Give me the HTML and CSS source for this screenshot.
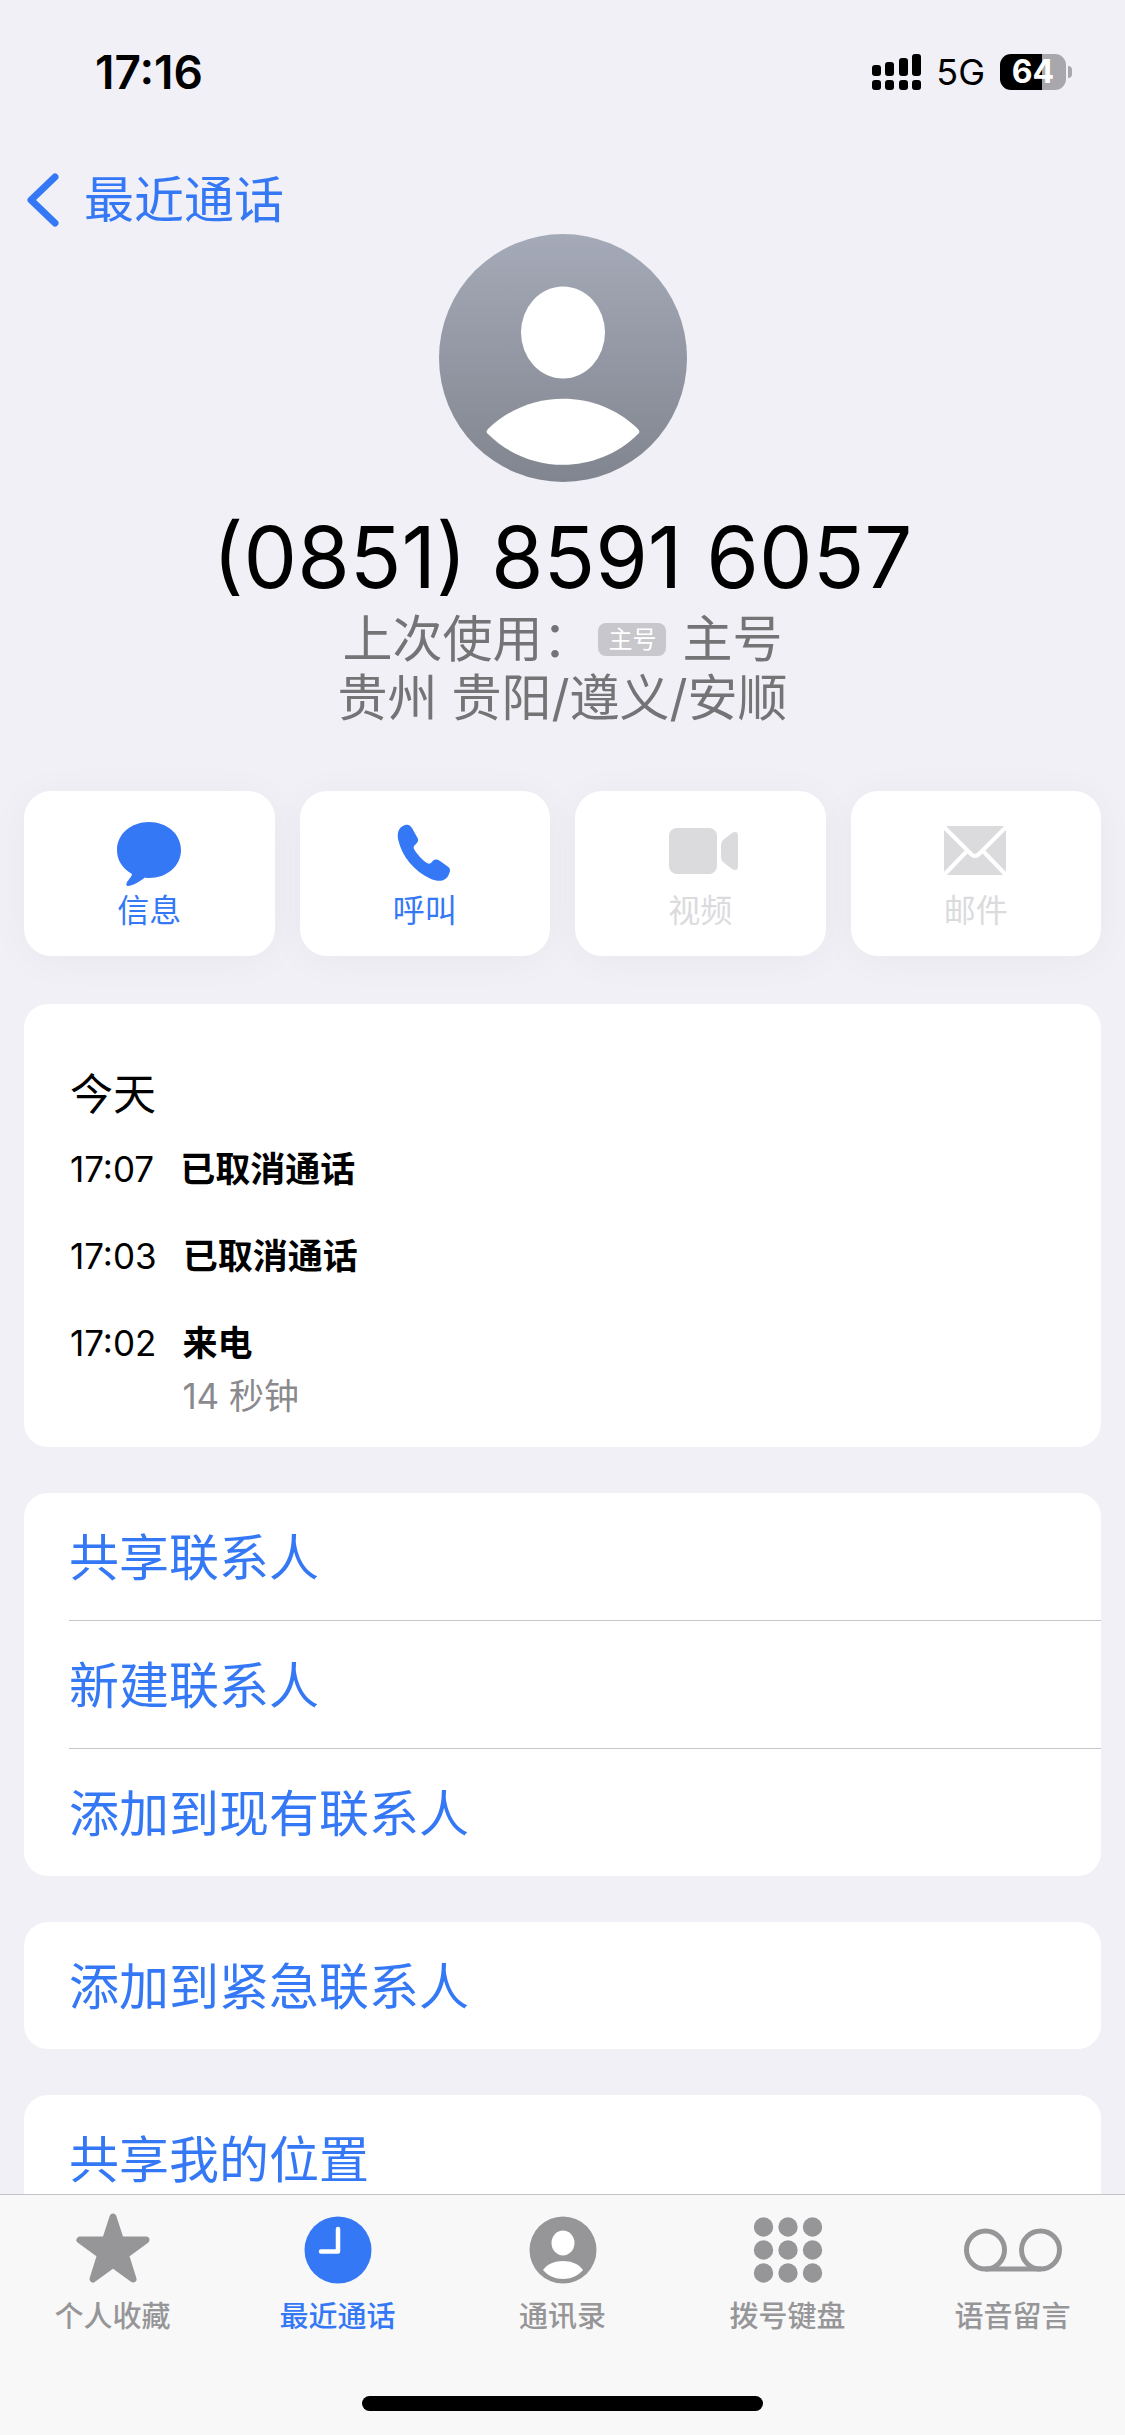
FILE: index.html
```html
<!DOCTYPE html>
<html lang="zh-CN">
<head>
    <meta charset="UTF-8">
    <meta name="viewport" content="width=device-width, initial-scale=1.0">
    <title>最近通话</title>
    <link rel="stylesheet" href="styles.css">
</head>
<body>
    <!-- Status Bar -->
    <div class="status-bar">
        <span class="clock">17:16</span>
        <div class="status-icons">
            <svg class="signal" width="49" height="36" viewBox="0 0 49 36">
                <rect x="0" y="11" width="9" height="11" rx="3"/>
                <rect x="13" y="8" width="9" height="14" rx="3"/>
                <rect x="27" y="4" width="9" height="18" rx="3"/>
                <rect x="40" y="0" width="9" height="22" rx="3"/>
                <rect x="0" y="26" width="9" height="10" rx="3"/>
                <rect x="13" y="26" width="9" height="10" rx="3"/>
                <rect x="27" y="26" width="9" height="10" rx="3"/>
                <rect x="40" y="26" width="9" height="10" rx="3"/>
            </svg>
            <span class="network">5G</span>
            <div class="battery"><span class="battery-level">64</span></div>
        </div>
    </div>

    <!-- Navigation -->
    <nav class="navbar">
        <a href="#" class="back">
            <svg width="36" height="56" viewBox="0 0 36 56" fill="none" stroke="currentColor" stroke-width="7" stroke-linecap="round" stroke-linejoin="round">
                <path d="M31 5L7 28L31 51"/>
            </svg>
            最近通话
        </a>
    </nav>

    <!-- Contact Header -->
    <header class="contact">
        <svg class="avatar" viewBox="0 0 248 248">
            <defs>
                <linearGradient id="avatar-fill" x1="0" y1="0" x2="0" y2="1">
                    <stop offset="0" stop-color="#a5aab8"/>
                    <stop offset="1" stop-color="#81858f"/>
                </linearGradient>
            </defs>
            <circle cx="124" cy="124" r="124" fill="url(#avatar-fill)"/>
            <ellipse cx="124" cy="98.5" rx="42" ry="46" fill="#fff"/>
            <path d="M49 200C47 198 47 197 50 194C91 155 157 155 198 194C201 197 201 198 199 200C158 241 90 241 49 200Z" fill="#fff"/>
        </svg>
        <h1>(0851) 8591 6057</h1>
        <p>上次使用：<span class="badge">主号</span> 主号</p>
        <p>贵州 贵阳/遵义/安顺</p>
    </header>

    <!-- Action Buttons -->
    <div class="actions">
        <button type="button">
            <svg width="70" height="62" viewBox="0 0 70 62" fill="currentColor">
                <path d="M35 2C53 2 67 14 67 30C67 46 53 58 35 58C34 58 32 58 31 57.5C25 62 18 66 14 66C12 66 12 64 13 62C16 58 18 56 18 54C8 48 3 40 3 30C3 14 17 2 35 2Z"/>
            </svg>
            信息
        </button>
        <button type="button">
            <svg width="70" height="62" viewBox="2 0 70 62" fill="currentColor">
                <path d="M17 5C20 4 22 5 24 8L29 17C31 20 30 22 28 24C26 26 25 27 26 29C29 34 34 40 39 43C41 44 42 44 44 42C46 39 49 39 52 41L59 46C62 48 63 50 61 54C58 62 50 62 43 59C26 51 14 37 10 19C9 12 11 7 17 5Z"/>
            </svg>
            呼叫
        </button>
        <button type="button" disabled>
            <svg width="70" height="62" viewBox="-4 0 70 62" fill="currentColor">
                <rect x="0" y="8" width="48" height="46" rx="8"/>
                <path d="M52 25Q52 22 54 20L63 13Q69 10 69 16V46Q69 52 63 49L54 42Q52 40 52 37Z"/>
            </svg>
            视频
        </button>
        <button type="button" disabled>
            <svg width="70" height="62" viewBox="1 0 70 62">
                <rect x="4" y="6" width="62" height="49" rx="3" fill="currentColor"/>
                <path d="M3 6L31 34Q35 38 39 34L67 6M3 56L27 31M67 56L43 31" fill="none" stroke="#fff" stroke-width="4"/>
            </svg>
            邮件
        </button>
    </div>

    <!-- Call History -->
    <section class="card history">
        <h2>今天</h2>
        <ul>
            <li><time>17:07</time><div><b>已取消通话</b></div></li>
            <li><time>17:03</time><div><b>已取消通话</b></div></li>
            <li><time>17:02</time><div><b>来电</b><small>14 秒钟</small></div></li>
        </ul>
    </section>

    <div class="card menu">
        <button type="button">共享联系人</button>
        <button type="button">新建联系人</button>
        <button type="button">添加到现有联系人</button>
    </div>

    <div class="card menu">
        <button type="button">添加到紧急联系人</button>
    </div>

    <div class="card menu">
        <button type="button">共享我的位置</button>
    </div>

    <!-- Tab Bar -->
    <footer class="tab-bar">
        <nav class="tabs">
            <a href="#">
                <svg width="76" height="72" viewBox="0 0 76 72" fill="currentColor" stroke="currentColor" stroke-width="7" stroke-linejoin="round">
                    <path d="M38 5L45.5 28H71L50.5 43L58 67L38 52.5L18 67L25.5 43L5 28H30.5Z"/>
                </svg>
                个人收藏
            </a>
            <a href="#" class="active">
                <svg width="76" height="72" viewBox="0 0 76 72" fill="none">
                    <circle cx="38" cy="38" r="33.5" fill="currentColor"/>
                    <path d="M38 17V39.5H21" stroke="#fff" stroke-width="4.5" stroke-linecap="round" stroke-linejoin="round"/>
                </svg>
                最近通话
            </a>
            <a href="#">
                <svg width="76" height="72" viewBox="0 0 76 72" fill="#fff">
                    <circle cx="38" cy="38" r="33.5" fill="currentColor"/>
                    <ellipse cx="38" cy="31" rx="11.5" ry="12.5"/>
                    <path d="M18 58C26 46 50 46 58 58C48 70 28 70 18 58Z"/>
                </svg>
                通讯录
            </a>
            <a href="#">
                <svg width="76" height="72" viewBox="0 0 76 72" fill="currentColor">
                    <circle cx="13.5" cy="15" r="9.7"/><circle cx="38" cy="15" r="9.7"/><circle cx="62.5" cy="15" r="9.7"/>
                    <circle cx="13.5" cy="38" r="9.7"/><circle cx="38" cy="38" r="9.7"/><circle cx="62.5" cy="38" r="9.7"/>
                    <circle cx="13.5" cy="61" r="9.7"/><circle cx="38" cy="61" r="9.7"/><circle cx="62.5" cy="61" r="9.7"/>
                </svg>
                拨号键盘
            </a>
            <a href="#">
                <svg width="100" height="72" viewBox="0 0 100 72" fill="none" stroke="currentColor" stroke-width="5">
                    <circle cx="22.5" cy="38" r="19"/>
                    <circle cx="77.5" cy="38" r="19"/>
                    <path d="M22 57H78"/>
                </svg>
                语音留言
            </a>
        </nav>
        <div class="home-indicator"></div>
    </footer>
</body>
</html>
```
FILE: styles.css
```css
* {
    box-sizing: border-box;
}

body {
    background-color: #f1f0f6;
    font-family: Inter, 'Noto Sans CJK SC', sans-serif;
    font-size: 50px;
    color: #000;
    margin: 0;
    padding: 0 24px;
}

h1, h2, p, ul {
    margin: 0;
    padding: 0;
    font-weight: 400;
}

a {
    color: inherit;
    text-decoration: none;
}

button {
    font: inherit;
    color: #3478f6;
    background-color: #fff;
    border: none;
    cursor: pointer;
}

/* Status bar */
.status-bar {
    display: flex;
    justify-content: space-between;
    align-items: center;
    height: 144px;
    padding: 0 35px 0 71px;
}

.clock {
    font-size: 46px;
    font-weight: 600;
}

.status-icons {
    display: flex;
    align-items: center;
    gap: 15px;
}

.network {
    font-size: 36px;
}

.battery {
    position: relative;
    width: 66px;
    height: 36px;
    border-radius: 11px;
    background: linear-gradient(to right, #000 64%, #a8a8ac 64%);
    color: #fff;
    font-size: 32px;
    font-weight: 700;
    line-height: 36px;
    text-align: center;
}

/* Battery tip */
.battery::after {
    content: "";
    position: absolute;
    left: 68px;
    top: 12px;
    width: 4px;
    height: 12px;
    border-radius: 0 4px 4px 0;
    background-color: #a8a8ac;
}

/* Navigation */
.navbar {
    height: 90px;
    padding-top: 20px;
    color: #3478f6;
}

.back {
    display: inline-flex;
    align-items: center;
    gap: 24px;
    line-height: 72px;
}

/* Contact header */
.contact {
    text-align: center;
    color: #747476;
}

.avatar {
    display: block;
    width: 248px;
    height: 248px;
    margin: 0 auto 24px;
}

.contact h1 {
    font-size: 85px;
    line-height: 104px;
    color: #000;
}

.contact p {
    line-height: 59px;
}

.badge {
    display: inline-block;
    width: 68px;
    margin: 0 2px 0 6px;
    border-radius: 8px;
    background-color: #c7c7cc;
    color: #fff;
    font-size: 24px;
    line-height: 33px;
    vertical-align: 9px;
}

/* Action buttons */
.actions {
    display: grid;
    grid-template-columns: repeat(4, 1fr);
    gap: 25px;
    margin: 63px 0 48px;
}

.actions button {
    display: flex;
    flex-direction: column;
    align-items: center;
    gap: 9px;
    height: 165px;
    padding: 29px 0 0;
    border-radius: 27px;
    box-shadow: 0 4px 40px rgba(0, 0, 0, 0.04);
    font-size: 32px;
    line-height: 40px;
}

.actions svg {
    overflow: visible;
}

.actions button:disabled {
    color: #dbdbdd;
    cursor: default;
}

/* Cards */
.card {
    margin-bottom: 46px;
    border-radius: 24px;
    background-color: #fff;
    overflow: hidden;
}

.history {
    padding: 60px 46px 24px;
}

.history h2 {
    font-size: 43px;
    line-height: 60px;
    margin-bottom: 19px;
}

.history ul {
    list-style-type: none;
    font-size: 35px;
    line-height: 52px;
}

.history li {
    display: flex;
    gap: 26px;
    margin-bottom: 35px;
}

.history li:last-child {
    margin-bottom: 0;
}

.history b {
    display: block;
    font-weight: 600;
}

.history small {
    display: block;
    font-size: 35px;
    line-height: 54px;
    color: #8a8a8e;
}

.menu {
    padding-left: 45px;
}

.menu button {
    display: block;
    width: 100%;
    padding: 4px 0 0;
    line-height: 123px;
    text-align: left;
}

.menu button + button {
    border-top: 1px solid #c6c6c8;
}

/* Tab bar */
.tab-bar {
    position: fixed;
    left: 0;
    right: 0;
    bottom: 0;
    padding-bottom: 24px;
    border-top: 1px solid #c4c4c7;
    background-color: #f9f8f9;
}

.tabs {
    display: flex;
}

.tabs a {
    flex: 1;
    display: flex;
    flex-direction: column;
    align-items: center;
    gap: 13px;
    padding-top: 17px;
    color: #969698;
    font-size: 29px;
    font-weight: 500;
    line-height: 40px;
}

.tabs a.active {
    color: #3478f6;
}

.home-indicator {
    width: 36%;
    max-width: 401px;
    height: 15px;
    margin: 59px auto 0;
    border-radius: 8px;
    background-color: #000;
}
```
